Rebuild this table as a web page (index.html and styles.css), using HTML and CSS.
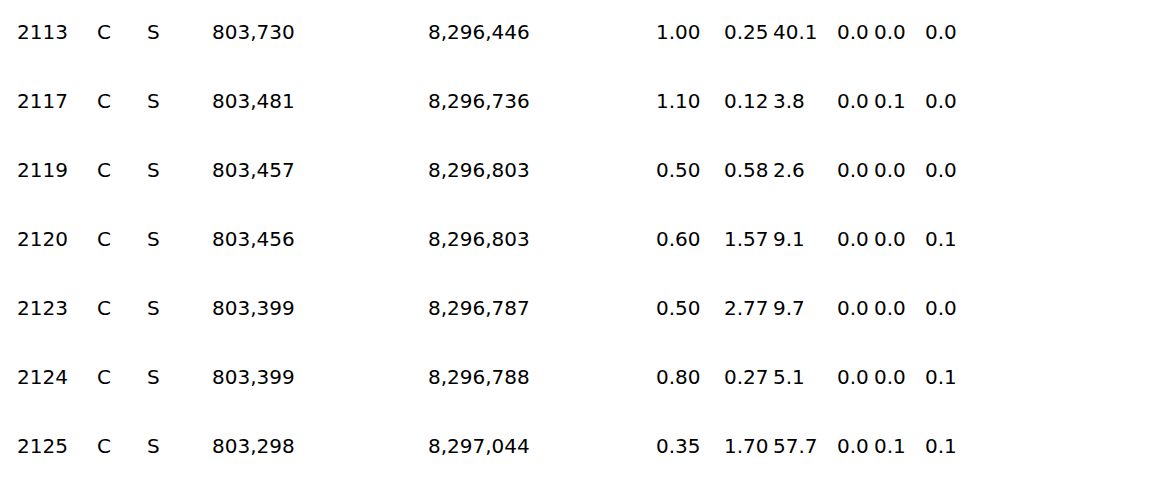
FILE: index.html
```html
<!DOCTYPE html>
<html>
<head>
<meta charset="utf-8">
<link rel="stylesheet" href="styles.css">
</head>
<body>
<div class="table">
  <div class="row"><span>2113</span><span>C</span><span>S</span><span>803,730</span><span>8,296,446</span><span>1.00</span><span>0.25</span><span>40.1</span><span>0.0</span><span>0.0</span><span>0.0</span></div>
  <div class="row"><span>2117</span><span>C</span><span>S</span><span>803,481</span><span>8,296,736</span><span>1.10</span><span>0.12</span><span>3.8</span><span>0.0</span><span>0.1</span><span>0.0</span></div>
  <div class="row"><span>2119</span><span>C</span><span>S</span><span>803,457</span><span>8,296,803</span><span>0.50</span><span>0.58</span><span>2.6</span><span>0.0</span><span>0.0</span><span>0.0</span></div>
  <div class="row"><span>2120</span><span>C</span><span>S</span><span>803,456</span><span>8,296,803</span><span>0.60</span><span>1.57</span><span>9.1</span><span>0.0</span><span>0.0</span><span>0.1</span></div>
  <div class="row"><span>2123</span><span>C</span><span>S</span><span>803,399</span><span>8,296,787</span><span>0.50</span><span>2.77</span><span>9.7</span><span>0.0</span><span>0.0</span><span>0.0</span></div>
  <div class="row"><span>2124</span><span>C</span><span>S</span><span>803,399</span><span>8,296,788</span><span>0.80</span><span>0.27</span><span>5.1</span><span>0.0</span><span>0.0</span><span>0.1</span></div>
  <div class="row"><span>2125</span><span>C</span><span>S</span><span>803,298</span><span>8,297,044</span><span>0.35</span><span>1.70</span><span>57.7</span><span>0.0</span><span>0.1</span><span>0.1</span></div>
</div>
</body>
</html>
```
FILE: styles.css
```css
html, body {
  margin: 0;
  padding: 0;
  background: #ffffff;
}
body {
  font-family: "DejaVu Sans", Verdana, sans-serif;
  font-size: 20px;
  color: #000000;
}
.table {
  display: flex;
  flex-direction: column;
  padding-left: 17px;
}
.row {
  display: grid;
  grid-template-columns: 80px 50px 65px 216px 228px 68px 49px 64px 37px 51px auto;
  height: 69px;
  box-sizing: border-box;
  padding-top: 21px;
  line-height: 23px;
  white-space: nowrap;
}
```
